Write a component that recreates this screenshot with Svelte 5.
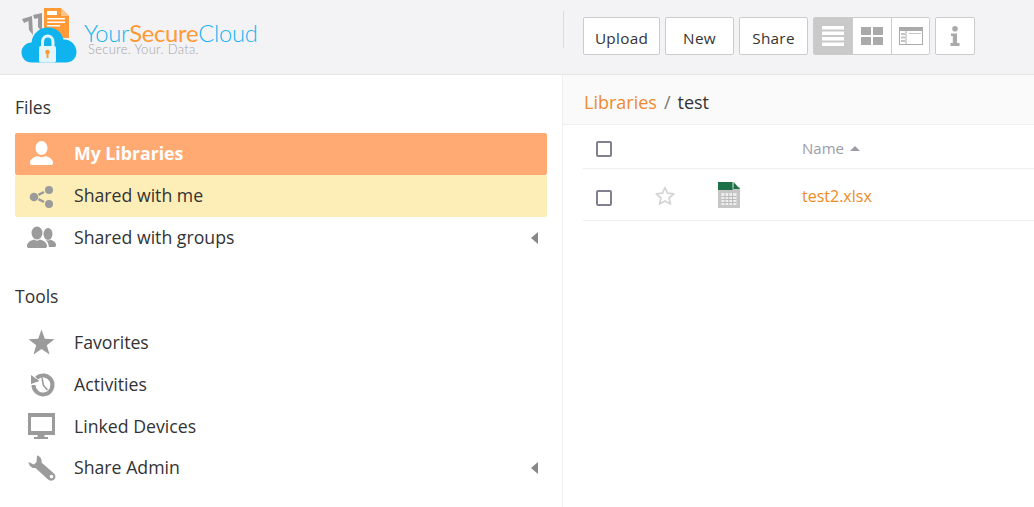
<script lang="ts">
	const tools = [
		{ label: 'Favorites', icon: 'star' },
		{ label: 'Activities', icon: 'history' },
		{ label: 'Linked Devices', icon: 'monitor' },
		{ label: 'Share Admin', icon: 'wrench', caret: true }
	];
</script>

{#snippet navIcon(name: string)}
	<svg class="nav-icon" viewBox="0 0 30 30" width="30" height="30" aria-hidden="true">
		{#if name === 'user'}
			<ellipse cx="15.500" cy="9" rx="6" ry="7" />
			<path d="M4 24 C4 20 8 18 11.500 17 C13.500 18.500 17.500 18.500 19.500 17 C23 18 27 20 27 24 C27 25.500 26 26 25 26 L6 26 C5 26 4 25.500 4 24 Z" />
		{:else if name === 'share'}
			<circle cx="23" cy="9" r="4" />
			<circle cx="8" cy="16" r="4.300" />
			<circle cx="23" cy="23" r="4" />
			<path d="M12.500 13.800 L18 11 M12.500 18.200 L18 21" stroke="#9b9b9b" stroke-width="2.500" />
		{:else if name === 'group'}
			<ellipse cx="11" cy="10" rx="5.500" ry="6.500" />
			<ellipse cx="22" cy="11" rx="4.500" ry="6" />
			<path d="M1 23 C1 19.500 4.500 17.500 8 16.500 C10 18 12 18 14 16.500 C17.500 17.500 21 19.500 21 23 C21 24.500 20 25 19 25 L3 25 C2 25 1 24.500 1 23 Z" />
			<path d="M19.500 16.800 C21 17.800 23 17.800 24.500 16.800 C27 17.500 30 19 30 22 C30 23.500 29.500 24 28 24 L22.800 24 C22.800 21 21.500 18.500 19.500 16.800 Z" />
		{:else if name === 'star'}
			<path d="M15.500 2.500 L18.800 11.800 L28.500 12.300 L20.800 18.200 L23.500 27.500 L15.500 22 L7.500 27.500 L10.200 18.200 L2.500 12.300 L12.200 11.800 Z" />
		{:else if name === 'history'}
			<path d="M5 6 L5 15 L13.500 12 Z" />
			<path d="M10.500 9 A9.500 9.500 0 1 1 7.500 16" fill="none" stroke="#9b9b9b" stroke-width="4" />
			<path d="M16 9 L17.500 16.500 L21.500 21" fill="none" stroke="#9b9b9b" stroke-width="1.600" />
		{:else if name === 'monitor'}
			<path fill-rule="evenodd" d="M2 2 H29 V24 H18.500 V26 H22 V28 H8 V26 H11.500 V24 H2 Z M5 6 V20 H26 V6 Z" />
		{:else if name === 'wrench'}
			<path fill-rule="evenodd" d="M11 2.500 C14.500 3 16 6.500 15.500 9.500 L28 20.500 C30.500 23 29.500 27 26 27.500 C24 28 22.500 27 21.500 26 L9.500 15 C6 15.500 3 13 2.500 9 L8 11.500 L10.500 9 Z M25.500 21.700 C26.500 21.700 27.300 22.500 27.300 23.500 C27.300 24.500 26.500 25.300 25.500 25.300 C24.500 25.300 23.700 24.500 23.700 23.500 C23.700 22.500 24.500 21.700 25.500 21.700 Z" />
		{/if}
	</svg>
{/snippet}

<div class="page">
	<header class="topbar">
		<div class="brand">
			<svg class="logo-mark" viewBox="0 0 58 56" width="58" height="56" aria-hidden="true">
				<path d="M2 11 L12 8 L13 27 L9 22 L8.500 13 L4 15 Z M13 7 L22 5 L22 24 L18 19 L18 10 L14.500 11 Z" fill="#999" />
				<path d="M24 0 H41 L49 8 V30 H24 Z" fill="#ff9a37" />
				<path d="M27 3 H37 V7 H27 Z M27 10 H45 V11.500 H27 Z M27 13.500 H45 V15 H27 Z M27 17 H40 V18.500 H27 Z" fill="#fff" />
				<path d="M41 0 V8 H49 Z" fill="#ffc48a" />
				<path d="M12 54.500 C5 54.500 1.500 49.500 1.500 44.500 C1.500 39 6 34.500 11.500 34.500 C12.500 25.500 19.500 19.500 28 19.500 C36.500 19.500 42 25 43.500 31.500 C50.500 31 56.500 37 56.500 44 C56.500 50.500 51.500 54.500 46 54.500 Z" fill="#0fb4ee" />
				<rect x="19" y="38" width="17" height="16.500" rx="2" fill="#e4f6fd" />
				<path d="M22.500 38 V34 C22.500 26 33 26 33 34 V38" fill="none" stroke="#e4f6fd" stroke-width="3" />
				<circle cx="27.500" cy="44" r="2.300" fill="#ff9a37" />
				<rect x="26.500" y="44" width="2" height="6" fill="#ff9a37" />
			</svg>
			<div class="brand-text">
				<div class="brand-name">Your<b>Secure</b>Cloud</div>
				<div class="brand-tag">Secure. Your. Data.</div>
			</div>
		</div>
		<div class="toolbar">
			<button type="button" class="btn">Upload</button>
			<button type="button" class="btn">New</button>
			<button type="button" class="btn">Share</button>
			<div class="view-group">
				<button type="button" class="view-btn active" aria-label="List view">
					<svg viewBox="0 0 22 20" width="22" height="20"><path d="M0 0H22V3.500H0ZM0 5.500H22V9H0ZM0 11H22V14.500H0ZM0 16.500H22V20H0Z" fill="#fff" /></svg>
				</button>
				<button type="button" class="view-btn" aria-label="Grid view">
					<svg viewBox="0 0 22 18" width="22" height="18"><path d="M0 0H10V8H0ZM12 0H22V8H12ZM0 10H10V18H0ZM12 10H22V18H12Z" fill="#aaa" /></svg>
				</button>
				<button type="button" class="view-btn" aria-label="Column view">
					<svg viewBox="0 0 24 18" width="24" height="18">
						<path fill-rule="evenodd" d="M0 0H24V18H0ZM7.500 4V17H23V4ZM1 4V17H6.500V4Z" fill="#aaa" />
						<path d="M2 6H6V8H2ZM2 9.500H6V11.500H2ZM2 13H6V15H2ZM10 6H22V7H10Z" fill="#c4c4c4" />
					</svg>
				</button>
			</div>
			<button type="button" class="view-btn solo" aria-label="Info">
				<svg viewBox="0 0 10 20" width="10" height="20"><circle cx="5" cy="2.800" r="2.800" fill="#aaa" /><path d="M1 7.500H7V17H9.500V20H0.500V17H2.800V10H1Z" fill="#aaa" /></svg>
			</button>
		</div>
	</header>

	<div class="body">
		<aside class="side">
			<h3 class="side-title">Files</h3>
			<ul class="nav">
				<li class="nav-item current">{@render navIcon('user')}<span>My Libraries</span></li>
				<li class="nav-item hover">{@render navIcon('share')}<span>Shared with me</span></li>
				<li class="nav-item">{@render navIcon('group')}<span>Shared with groups</span><i class="caret"></i></li>
			</ul>
			<h3 class="side-title tools">Tools</h3>
			<ul class="nav tool-nav">
				{#each tools as t}
					<li class="nav-item">{@render navIcon(t.icon)}<span>{t.label}</span>{#if t.caret}<i class="caret"></i>{/if}</li>
				{/each}
			</ul>
		</aside>

		<main class="content">
			<div class="crumbs"><a href="#libs">Libraries</a><span class="sep">/</span><span>test</span></div>
			<div class="table">
				<div class="row head">
					<div class="c-check"><span class="checkbox"></span></div>
					<div class="c-star"></div>
					<div class="c-icon"></div>
					<div class="c-name">Name <i class="sort"></i></div>
				</div>
				<div class="row file">
					<div class="c-check"><span class="checkbox"></span></div>
					<div class="c-star">
						<svg viewBox="0 0 22 21" width="22" height="21" aria-hidden="true"><path d="M11 2.500 L13.500 8.200 L19.800 8.800 L15 13 L16.500 19 L11 15.900 L5.500 19 L7 13 L2.200 8.800 L8.500 8.200 Z" fill="none" stroke="#d4d4d4" stroke-width="1.700" stroke-linejoin="round" /></svg>
					</div>
					<div class="c-icon">
						<svg viewBox="0 0 22 26" width="22" height="26" aria-hidden="true">
							<path d="M0 0H14.500V5H22V26H0Z" fill="#c6c6c6" />
							<path d="M0 0H14.500V8H0Z" fill="#1e7145" />
							<path d="M15.500 0 L22 7 H15.500 Z" fill="#1e7145" />
							<path d="M3.500 11H18.500V23H3.500Z" fill="#eee" />
							<path d="M3.500 14.500H18.500M3.500 17.500H18.500M3.500 20.500H18.500M7 11V23M10.800 11V23M14.600 11V23" stroke="#bbb" stroke-width="1" />
						</svg>
					</div>
					<div class="c-name"><a href="#file">test2.xlsx</a></div>
				</div>
			</div>
		</main>
	</div>
</div>

<style>
	:global(body) {
		margin: 0;
		background: #fff;
		font-family: 'Open Sans', 'Noto Sans', sans-serif;
		color: #333;
	}
	.page {
		height: 507px;
		display: flex;
		flex-direction: column;
		overflow: hidden;
	}
	.topbar {
		height: 74px;
		flex: none;
		background: #f3f3f5;
		border-bottom: 1px solid #e6e6e6;
		display: flex;
	}
	.brand {
		width: 563px;
		flex: none;
		box-sizing: border-box;
		padding: 8px 0 0 20px;
		display: flex;
		align-items: flex-start;
		gap: 6px;
	}
	.brand-text {
		padding-top: 15px;
	}
	.brand-name {
		font-family: 'Lato', sans-serif;
		font-size: 23.800px;
		font-weight: 300;
		line-height: 20px;
		color: #16b3ee;
		letter-spacing: -0.300px;
	}
	.brand-name b {
		font-weight: 400;
		color: #ff9a37;
	}
	.brand-tag {
		font-family: 'Lato', sans-serif;
		font-size: 13px;
		font-weight: 300;
		line-height: 13px;
		color: #a6a6a6;
		padding-left: 4px;
		letter-spacing: 0.300px;
	}
	.toolbar {
		position: relative;
		padding: 17px 0 0 20px;
		display: flex;
		align-items: flex-start;
		gap: 5px;
	}
	.toolbar::before {
		content: '';
		position: absolute;
		left: 0;
		top: 11px;
		height: 37px;
		border-left: 1px solid #dcdcdc;
	}
	.btn {
		height: 38px;
		box-sizing: border-box;
		background: #fff;
		border: 1px solid #ccc;
		border-radius: 2px;
		padding: 3px 0 0;
		font: inherit;
		font-size: 15.300px;
		color: #333;
		letter-spacing: 0.300px;
	}
	.btn:nth-child(1) {
		width: 77px;
	}
	.btn:nth-child(2),
	.btn:nth-child(3) {
		width: 69px;
	}
	.view-group {
		display: flex;
		height: 38px;
		box-sizing: border-box;
		border: 1px solid #ccc;
		border-radius: 2px;
		overflow: hidden;
		background: #fff;
	}
	.view-btn {
		width: 39px;
		height: 100%;
		padding: 0;
		background: #fff;
		border: 0;
		border-left: 1px solid #ccc;
		display: flex;
		align-items: center;
		justify-content: center;
	}
	.view-btn:first-child {
		border-left: 0;
		width: 38px;
	}
	.view-btn:last-child {
		width: 38px;
	}
	.view-btn.active {
		background: #c9c9c9;
	}
	.view-btn.solo {
		width: 40px;
		height: 38px;
		box-sizing: border-box;
		border: 1px solid #ccc;
		border-radius: 2px;
	}
	.body {
		flex: 1;
		display: flex;
		min-height: 0;
	}
	.side {
		width: 563px;
		flex: none;
		box-sizing: border-box;
		border-right: 1px solid #eee;
		padding: 0 15px;
	}
	.side-title {
		margin: 0;
		font-size: 17.500px;
		font-weight: 400;
		line-height: 24px;
		padding: 20px 0 14px;
		color: #333;
	}
	.side-title.tools {
		padding-top: 25px;
		padding-bottom: 13px;
	}
	.nav {
		list-style: none;
		margin: 0;
		padding: 0;
	}
	.nav-item {
		height: 42px;
		display: flex;
		align-items: center;
		padding: 0 9px 0 11px;
		gap: 18px;
		font-size: 17.700px;
		color: #333;
		border-radius: 2px;
	}
	.nav-item span {
		flex: 1;
		position: relative;
		top: -1px;
	}
	.tool-nav .nav-item span {
		top: 0;
	}
	.tool-nav .nav-item:last-child span {
		top: -1px;
	}
	.nav-icon {
		fill: #9b9b9b;
		flex: none;
		overflow: visible;
	}
	.current {
		background: #ffaa72;
		color: #fff;
		font-weight: 700;
	}
	.current .nav-icon {
		fill: #fff;
	}
	.hover {
		background: #fdedb6;
	}
	.caret {
		width: 0;
		height: 0;
		border: 6px solid transparent;
		border-left: 0;
		border-right: 7px solid #888;
	}
	.content {
		flex: 1;
		min-width: 0;
	}
	.crumbs {
		height: 50px;
		box-sizing: border-box;
		background: #fafafa;
		border-bottom: 1px solid #eee;
		padding-left: 21px;
		font-size: 18px;
		line-height: 54px;
		color: #333;
	}
	.crumbs a {
		color: #ee8a2e;
		text-decoration: none;
	}
	.sep {
		margin: 0 7px;
		color: #777;
	}
	.table {
		margin-left: 20px;
	}
	.row {
		display: grid;
		grid-template-columns: 60px 62px 97px 1fr;
		align-items: center;
		box-sizing: border-box;
		border-bottom: 1px solid #eee;
	}
	.head {
		height: 44px;
		padding-top: 4px;
	}
	.head .c-name {
		margin-top: -2px;
	}
	.file {
		height: 52px;
		padding-top: 2px;
	}
	.checkbox {
		display: block;
		width: 12px;
		height: 12px;
		margin-left: 13px;
		border: 2px solid #80808f;
		border-radius: 2px;
	}
	.file .checkbox {
		margin-top: 5px;
	}
	.c-star,
	.c-icon {
		display: flex;
		align-items: center;
	}
	.c-star {
		padding-left: 11px;
	}
	.c-icon svg {
		margin-left: 13px;
		margin-top: -2px;
	}
	.c-name {
		font-size: 15px;
		color: #9c9ca8;
	}
	.c-name a {
		color: #ef8a1e;
		font-size: 16px;
		text-decoration: none;
	}
	.sort {
		display: inline-block;
		width: 0;
		height: 0;
		border: 5px solid transparent;
		border-top: 0;
		border-bottom: 5px solid #9c9ca8;
		vertical-align: middle;
		margin-left: 2px;
		margin-top: -2px;
	}
</style>
